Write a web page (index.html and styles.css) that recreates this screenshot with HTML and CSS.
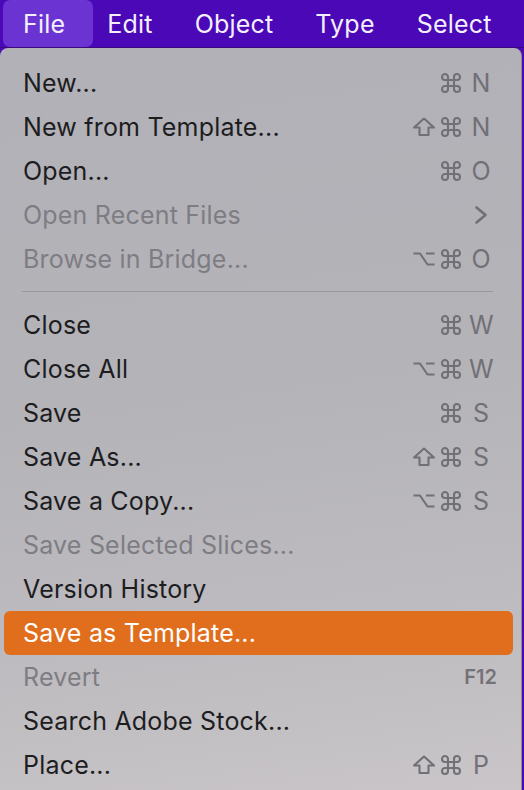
FILE: index.html
```html
<!DOCTYPE html>
<html lang="en">
<head>
    <meta charset="UTF-8">
    <meta name="viewport" content="width=device-width, initial-scale=1.0">
    <title>File Menu</title>
    <link rel="stylesheet" href="styles.css">
</head>
<body>

<svg class="defs" width="0" height="0">
  <symbol id="cmd" viewBox="0 0 24 24"><path d="M9 6a3 3 0 1 0-3 3h12a3 3 0 1 0-3-3v12a3 3 0 1 0 3-3H6a3 3 0 1 0 3 3V6z"/></symbol>
  <symbol id="shift" viewBox="0 0 24 24"><path d="M12 3.5 22 12.5h-5.5V20h-9v-7.5H2z"/></symbol>
  <symbol id="opt" viewBox="0 0 24 24"><path d="M1.5 6.5h6.5l7.5 11h7M14 6.5h8.5"/></symbol>
  <symbol id="chev" viewBox="0 0 24 24"><path d="M7.5 4.5l9 7.5-9 7.5"/></symbol>
</svg>

<div class="menubar">
  <div class="menubar-item active">File</div>
  <div class="menubar-item">Edit</div>
  <div class="menubar-item">Object</div>
  <div class="menubar-item">Type</div>
  <div class="menubar-item">Select</div>
</div>

<div class="menu">
  <div class="row">
    <span class="label">New...</span>
    <span class="keys"><i></i><svg><use href="#cmd"/></svg><b>N</b></span>
  </div>
  <div class="row">
    <span class="label">New from Template...</span>
    <span class="keys"><svg><use href="#shift"/></svg><svg><use href="#cmd"/></svg><b>N</b></span>
  </div>
  <div class="row">
    <span class="label">Open...</span>
    <span class="keys"><i></i><svg><use href="#cmd"/></svg><b>O</b></span>
  </div>
  <div class="row disabled">
    <span class="label">Open Recent Files</span>
    <span class="keys"><svg class="chev"><use href="#chev"/></svg></span>
  </div>
  <div class="row disabled">
    <span class="label">Browse in Bridge...</span>
    <span class="keys"><svg><use href="#opt"/></svg><svg><use href="#cmd"/></svg><b>O</b></span>
  </div>

  <div class="separator"></div>

  <div class="row">
    <span class="label">Close</span>
    <span class="keys"><i></i><svg><use href="#cmd"/></svg><b>W</b></span>
  </div>
  <div class="row">
    <span class="label">Close All</span>
    <span class="keys"><svg><use href="#opt"/></svg><svg><use href="#cmd"/></svg><b>W</b></span>
  </div>
  <div class="row">
    <span class="label">Save</span>
    <span class="keys"><i></i><svg><use href="#cmd"/></svg><b>S</b></span>
  </div>
  <div class="row">
    <span class="label">Save As...</span>
    <span class="keys"><svg><use href="#shift"/></svg><svg><use href="#cmd"/></svg><b>S</b></span>
  </div>
  <div class="row">
    <span class="label">Save a Copy...</span>
    <span class="keys"><svg><use href="#opt"/></svg><svg><use href="#cmd"/></svg><b>S</b></span>
  </div>
  <div class="row disabled">
    <span class="label">Save Selected Slices...</span>
  </div>
  <div class="row">
    <span class="label">Version History</span>
  </div>
  <div class="row selected">
    <span class="label">Save as Template...</span>
  </div>
  <div class="row disabled">
    <span class="label">Revert</span>
    <span class="fkey">F12</span>
  </div>
  <div class="row">
    <span class="label">Search Adobe Stock...</span>
  </div>
  <div class="row">
    <span class="label">Place...</span>
    <span class="keys"><svg><use href="#shift"/></svg><svg><use href="#cmd"/></svg><b>P</b></span>
  </div>
</div>

</body>
</html>
```

FILE: styles.css
```css
body {
  margin: 0;
  height: 790px;
  overflow: hidden;
  background-color: #4a08b6;
  font-family: Inter, "Noto Sans", sans-serif;
}

.defs {
  position: absolute;
}

.menubar {
  display: flex;
  height: 47px;
  padding-left: 3px;
  background-color: #4a08b6;
  border-bottom: 1px solid #3a0a7a;
}

.menubar-item {
  display: flex;
  align-items: center;
  padding: 0 21px;
  color: #f4f0fb;
  font-size: 25px;
  letter-spacing: 0.2px;
  border-radius: 7px;
}

.menubar-item.active {
  padding: 0 28px 0 20px;
  margin-right: -7px;
  background-color: #6b34d2;
}

.menu {
  height: 742px;
  margin-right: 2px;
  padding-top: 13px;
  box-sizing: border-box;
  border-radius: 8px 8px 0 0;
  background: linear-gradient(172deg, #b2b1b7 0%, #b4b3b8 45%, #bdbbbf 75%, #c9c5c8 100%);
  border-right: 1px solid #8e8d92;
}

.row {
  display: flex;
  align-items: center;
  justify-content: space-between;
  height: 44px;
  margin: 0 8px 0 4px;
  padding: 0 20px 0 19px;
  border-radius: 6px;
  color: #1d1d1f;
  font-size: 25px;
  letter-spacing: 0.2px;
}

.row.disabled {
  color: #7e7d83;
}

.row.selected {
  background-color: #e06e1d;
  color: #ffffff;
}

.keys {
  display: flex;
  align-items: center;
  color: #717076;
}

.keys i,
.keys svg {
  display: block;
  width: 24px;
  height: 24px;
}

.keys svg + svg {
  margin-left: 3px;
}

.keys svg {
  fill: none;
  stroke: currentColor;
  stroke-width: 2.1;
  stroke-linejoin: round;
}

.keys svg.chev {
  stroke-width: 2.6;
  stroke-linecap: round;
}

.keys b {
  width: 24px;
  margin-left: 6px;
  font-weight: 400;
  letter-spacing: 0;
  text-align: center;
}

.fkey {
  font-size: 20px;
  font-weight: 600;
  letter-spacing: 0;
  color: #737277;
  margin-right: -4px;
}

.separator {
  height: 1px;
  margin: 10px 28px 11px 22px;
  background-color: #98979c;
}
```
